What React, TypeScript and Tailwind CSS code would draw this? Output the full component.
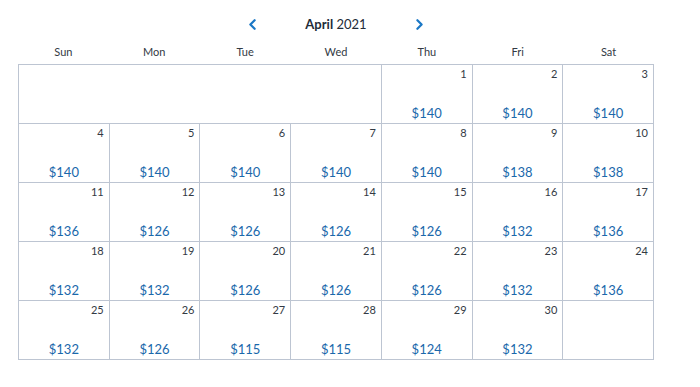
import { ChevronLeft, ChevronRight } from "lucide-react";

const WEEKDAYS = ["Sun", "Mon", "Tue", "Wed", "Thu", "Fri", "Sat"];

// price per day of April 2021
const PRICES: Record<number, number> = {
  1: 140, 2: 140, 3: 140,
  4: 140, 5: 140, 6: 140, 7: 140, 8: 140, 9: 138, 10: 138,
  11: 136, 12: 126, 13: 126, 14: 126, 15: 126, 16: 132, 17: 136,
  18: 132, 19: 132, 20: 126, 21: 126, 22: 126, 23: 132, 24: 136,
  25: 132, 26: 126, 27: 115, 28: 115, 29: 124, 30: 132,
};

const OFFSET = 4; // April 1st 2021 was a Thursday

const App = () => {
  const cells: (number | null)[] = [];
  for (let i = 0; i < OFFSET; i++) cells.push(null);
  for (let d = 1; d <= 30; d++) cells.push(d);
  while (cells.length % 7) cells.push(null);

  return (
    <div
      className="w-[700px] h-[387px] bg-white text-[#2b2f36]"
      style={{ fontFamily: "Lato, 'Noto Sans', sans-serif" }}
    >
      <div className="pl-[18px] w-[654px]">
        {/* Month header */}
        <div className="flex items-center justify-center h-[46px] pt-[3px]">
          <button className="text-[#1b78c6] w-[30px] flex justify-center">
            <ChevronLeft size={17} strokeWidth={3.2} />
          </button>
          <div className="w-[137px] text-center text-[13px] text-[#222b38]">
            <span className="font-bold">April</span> 2021
          </div>
          <button className="text-[#1b78c6] w-[30px] flex justify-center">
            <ChevronRight size={17} strokeWidth={3.2} />
          </button>
        </div>

        {/* Weekday labels */}
        <div className="grid grid-cols-7 h-[18px] items-start">
          {WEEKDAYS.map((w) => (
            <div key={w} className="text-center text-[11px] leading-[12px] text-[#333a44]">
              {w}
            </div>
          ))}
        </div>

        {/* Grid */}
        <div className="grid grid-cols-7 border-t border-l border-[#bdc5d2]">
          {OFFSET > 0 && (
            <div className="col-span-4 h-[59px] border-r border-b border-[#bdc5d2]" />
          )}
          {cells.slice(OFFSET).map((d, i) => (
            <div
              key={i}
              className="relative h-[59px] border-r border-b border-[#bdc5d2] flex flex-col"
            >
              {d !== null && (
                <>
                  <div className="text-right pr-[5px] pt-[2px] text-[11px] leading-[14px] text-[#333a44]">
                    {d}
                  </div>
                  <div className="mt-auto pb-[2px] text-center text-[13px] leading-[16px] text-[#1a68ab]">
                    ${PRICES[d]}
                  </div>
                </>
              )}
            </div>
          ))}
        </div>
      </div>
    </div>
  );
};

export default App;
